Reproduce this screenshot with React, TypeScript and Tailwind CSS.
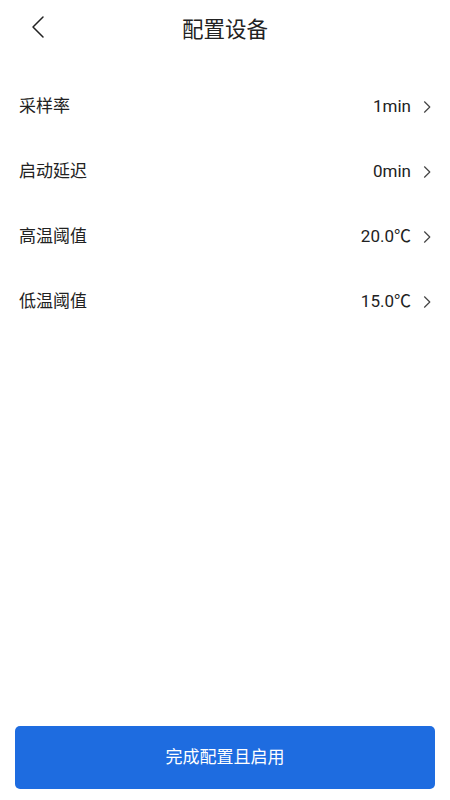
import React from "react";

const rows = [
  { label: "采样率", value: "1min" },
  { label: "启动延迟", value: "0min" },
  { label: "高温阈值", value: "20.0℃" },
  { label: "低温阈值", value: "15.0℃" },
];

function Chevron() {
  return (
    <svg width="10" height="14" viewBox="0 0 10 14" fill="none" className="ml-[11px]">
      <path d="M2.5 1.8 L7.8 7 L2.5 12.2" stroke="#444" strokeWidth="1.2" strokeLinecap="round" strokeLinejoin="round" />
    </svg>
  );
}

export default function App() {
  return (
    <div
      className="w-[450px] h-[800px] bg-white flex flex-col text-[#222]"
      style={{ fontFamily: "Roboto, 'Noto Sans CJK SC', sans-serif" }}
    >
      <div className="h-[60px] flex items-center relative shrink-0">
        <div className="absolute left-[31px] top-[15px]">
          <svg width="14" height="24" viewBox="0 0 14 24" fill="none">
            <path d="M12 2 L2 12 L12 22" stroke="#222" strokeWidth="1.5" strokeLinecap="round" strokeLinejoin="round" />
          </svg>
        </div>
        <div className="w-full text-center text-[21.5px] leading-none">配置设备</div>
      </div>
      <div className="mt-[14px] flex flex-col">
        {rows.map((r) => (
          <div key={r.label} className="h-[65px] flex items-center justify-between pl-[19px] pr-[18px]">
            <span className="text-[17px]">{r.label}</span>
            <span className="flex items-center text-[17px]">
              {r.value}
              <Chevron />
            </span>
          </div>
        ))}
      </div>
      <button className="mt-auto mx-[15px] mb-[11px] h-[63px] rounded-[5px] bg-[#1e6ce0] text-white text-[17px] shrink-0">
        完成配置且启用
      </button>
    </div>
  );
}
